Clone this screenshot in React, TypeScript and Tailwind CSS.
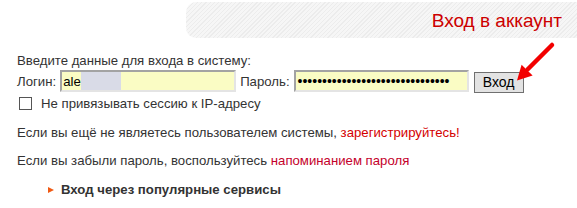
import React from 'react';

const FONT = "font-['Liberation_Sans',Arial,sans-serif]";

function Arrow() {
  return (
    <svg
      className="absolute left-[510px] top-[38px]"
      width="48"
      height="46"
      viewBox="0 0 48 46"
    >
      <line x1="42" y1="5" x2="17.5" y2="29.5" stroke="#f20000" strokeWidth="4.5" strokeLinecap="round" />
      <polygon points="7,40.5 11.6,24.8 22.6,35.6" fill="#f20000" />
    </svg>
  );
}

function Bullet() {
  return (
    <svg width="6" height="6" viewBox="0 0 6 6" className="mr-[7px]">
      <polygon points="0,0 6,3 0,6" fill="#f05a14" />
    </svg>
  );
}

export default function App() {
  const dots = '•'.repeat(31);

  return (
    <div className={`relative w-[577px] h-[208px] bg-white text-[13.2px] text-[#333] ${FONT}`}>
      <div className="ml-[186px] mt-[2px] flex h-[36px] items-center justify-end rounded-l-[10px] bg-[repeating-linear-gradient(135deg,#f6f6f6_0px,#f6f6f6_2px,#ececec_2px,#ececec_3px)] pr-[15px]">
        <span className="text-[19px] leading-none text-[#cc0000]">Вход в аккаунт</span>
      </div>

      <div className="pl-[17px]">
        <p className="mt-[15px] leading-[15px]">Введите данные для входа в систему:</p>

        <div className="mt-[2px] flex h-[22px] items-center">
          <span className="leading-[15px]">Логин:</span>
          <div className="ml-[4px] flex h-[22px] w-[176px] items-stretch border-2 border-b-[#e4e4e4] border-l-[#a3a3a3] border-r-[#e4e4e4] border-t-[#a3a3a3] bg-[#fafcc4] pl-[1px]">
            <span className="self-center leading-[15px] text-black">ale</span>
            <span className="w-[40px] bg-[#d9dbe7]" />
          </div>

          <span className="ml-[4px] leading-[15px]">Пароль:</span>
          <div className="ml-[4px] flex h-[22px] w-[175px] items-center border-2 border-b-[#e4e4e4] border-l-[#a3a3a3] border-r-[#e4e4e4] border-t-[#a3a3a3] bg-[#fafcc4] pl-[2px]">
            <span className="text-[14px] leading-none text-black">{dots}</span>
          </div>

          <button className="ml-[5px] mt-[2px] h-[21px] w-[50px] border border-[#707070] bg-[#e3e3e3] text-[14px] leading-none text-black">
            Вход
          </button>
        </div>

        <label className="mt-[5px] flex h-[13px] items-center">
          <span className="ml-[2px] h-[13px] w-[13px] border border-[#555] bg-white" />
          <span className="ml-[9px] leading-[15px]">Не привязывать сессию к IP-адресу</span>
        </label>

        <p className="mt-[15px] leading-[16px]">
          Если вы ещё не являетесь пользователем системы,{' '}
          <a className="text-[#d40000]">зарегистрируйтесь!</a>
        </p>

        <p className="mt-[12px] leading-[16px]">
          Если вы забыли пароль, воспользуйтесь{' '}
          <a className="text-[#c4002b]">напоминанием пароля</a>
        </p>

        <div className="mt-[13px] flex h-[16px] items-center pl-[31px] font-bold">
          <Bullet />
          <span className="leading-[16px]">Вход через популярные сервисы</span>
        </div>
      </div>

      <Arrow />
    </div>
  );
}
